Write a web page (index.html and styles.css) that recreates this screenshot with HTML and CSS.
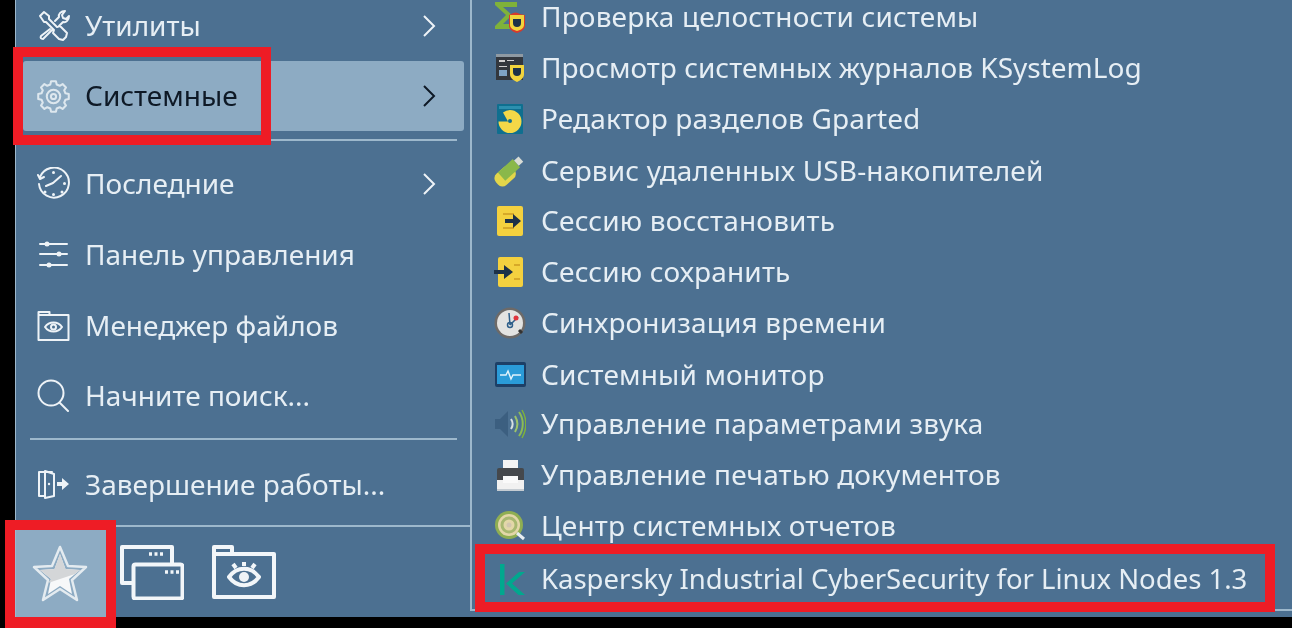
FILE: index.html
```html
<!DOCTYPE html>
<html lang="ru">
<head>
<meta charset="utf-8">
<title>Меню</title>
<link rel="stylesheet" href="styles.css">
</head>
<body>
<div class="screen">
  <div class="menu">
    <div class="left">
      <div class="cats">
        <div class="item">
          <svg class="icon" viewBox="0 0 33 33"><path d="M3 7 7 3l5 4v3l8 8 3-1 7 7-1 4-3 3-4-1-6-6 1-3-8-8H7z M18 12l4-4c-1-3 2-6 6-6l-3 4 1 3 3 1 3-3c0 4-3 7-6 6l-4 4 M13 20 4 27c-1 2 0 3 2 3l1-1 8-8"/></svg>
          <span class="label">Утилиты</span>
          <svg class="chev" viewBox="0 0 14 24"><path d="M2 2l10 10L2 22"/></svg>
        </div>
        <div class="item active">
          <svg class="icon gear" viewBox="0 0 32 32"><polygon points="13.65,1.2 18.35,1.2 19.1,4.4 22,5.6 24.8,3.9 28.1,7.2 26.4,10 27.6,12.9 30.8,13.65 30.8,18.35 27.6,19.1 26.4,22 28.1,24.8 24.8,28.1 22,26.4 19.1,27.6 18.35,30.8 13.65,30.8 12.9,27.6 10,26.4 7.2,28.1 3.9,24.8 5.6,22 4.4,19.1 1.2,18.35 1.2,13.65 4.4,12.9 5.6,10 3.9,7.2 7.2,3.9 10,5.6 12.9,4.4"/><circle cx="16" cy="16" r="6.5"/><circle cx="16" cy="16" r="2.5"/></svg>
          <span class="label">Системные</span>
          <svg class="chev" viewBox="0 0 14 24"><path d="M2 2l10 10L2 22"/></svg>
        </div>
      </div>
      <hr class="sep sep-a">
      <div class="cats">
        <div class="item">
          <svg class="icon" viewBox="0 0 33 33"><path d="M3 10A15 15 0 1 1 2 17M1 8l2 4 4-2M9 19l7-3 8-7"/><circle class="fill" cx="16.500" cy="5.500" r="1.500"/><circle class="fill" cx="27.500" cy="16.500" r="1.500"/><circle class="fill" cx="16.500" cy="27.500" r="1.500"/><circle class="fill" cx="8" cy="25" r="1.500"/><circle class="fill" cx="25" cy="25" r="1.500"/></svg>
          <span class="label">Последние</span>
          <svg class="chev" viewBox="0 0 14 24"><path d="M2 2l10 10L2 22"/></svg>
        </div>
        <div class="item">
          <svg class="icon" viewBox="0 0 33 33"><path d="M3 6h27M3 16h27M3 27h27"/><circle class="fill" cx="10" cy="6" r="2.500"/><circle class="fill" cx="22" cy="16" r="2.500"/><circle class="fill" cx="12" cy="27" r="2.500"/></svg>
          <span class="label">Панель управления</span>
        </div>
        <div class="item">
          <svg class="icon" viewBox="0 0 33 33"><path d="M1.500 31V3h11v3h19v25zM1.500 6h11"/><path d="M8 18c4-6 13-6 17 0-4 6-13 6-17 0z"/><circle cx="16.500" cy="18" r="2.500"/></svg>
          <span class="label">Менеджер файлов</span>
        </div>
        <div class="item search">
          <svg class="icon" viewBox="0 0 33 33"><circle cx="14" cy="14" r="12.500"/><path d="M23 24l8 8"/></svg>
          <span class="label">Начните поиск...</span>
        </div>
      </div>
      <hr class="sep sep-b">
      <div class="item">
        <svg class="icon" viewBox="0 0 33 33"><path d="M15 4H2v24h6M8 30V3l9 3v22l-9 2"/><path class="fill" d="M20 14h5v-4l7 6-7 6v-4h-5z"/><circle class="fill" cx="12" cy="16" r="1.200"/></svg>
        <span class="label">Завершение работы...</span>
      </div>
      <div class="bar">
        <div class="tile">
          <svg class="star" viewBox="0 0 56 58"><polygon class="star-out" points="28,2 36,21 54,22 40,35 45,55 28,44 11,55 16,35 2,22 20,21"/><polygon class="star-in" points="28,9 33.500,24 48,25 37,34 40,49 28,41 16,49 19,34 8,25 22.500,24"/><polygon class="star-top" points="28,9 33.500,24 48,25 43,29 16,38 19,34 8,25 22.500,24"/></svg>
        </div>
        <svg class="windows" viewBox="0 0 64 55"><path d="M13 38H2V2h50v18"/><rect x="13.500" y="19.500" width="49" height="34" rx="2"/><path class="dash" d="M29 9h16M45 27h16"/></svg>
        <svg class="eyefolder" viewBox="0 0 64 54"><path d="M2 52V2h18v7h42v43zM2 9h18"/><path d="M17 32c8-11 22-11 30 0-8 11-22 11-30 0z"/><circle class="fill" cx="32" cy="32" r="5"/><path d="M32 17v4M21 19l3 4M43 19l-3 4"/></svg>
      </div>
    </div>
    <div class="right">
      <div class="apps">
        <div class="app">
          <svg class="app-icon" viewBox="0 0 32 32"><path d="M23 1H1v3l11 10L1 25v3h18v-5H9l9-9-9-8h14z" fill="#7fb23a"/><path d="M17 13c3-2 6-2 9 0l5 1v11c0 3-4 6-8 7-4-1-8-4-8-7V14z" fill="#d83a2a"/><path d="M16 14h14v10c0 3-3 5-7 6-4-1-7-3-7-6z" fill="#f2d43c"/><path d="M19 18h8v4a4 4 0 0 1-8 0z" fill="#1d3148"/></svg>
          <span>Проверка целостности системы</span>
        </div>
        <div class="app log">
          <svg class="app-icon" viewBox="0 0 32 32"><rect x="2" y="2" width="27" height="26" fill="#33373d"/><rect x="2" y="2" width="27" height="3" fill="#8f9aa3"/><path d="M5 8h6v2H5zM13 8h7v1h-7zM5 14h8v1H5z" fill="#d0cfcf"/><path d="M5 18h8v6H5z" fill="#7fa4c6"/><path d="M16 13h14v9c0 4-3 6-7 8-4-2-7-4-7-8z" fill="#f2d43c"/><path d="M19 16h8v4a4 4 0 0 1-8 0z" fill="#1d3148"/></svg>
          <span>Просмотр системных журналов KSystemLog</span>
        </div>
        <div class="app">
          <svg class="app-icon" viewBox="0 0 32 32"><rect x="3" y="1" width="26" height="30" rx="1" fill="#0f6f8f"/><path d="M5 3h22v3H5z" fill="#2c8fae"/><path d="M16 7a11.500 11.500 0 1 1-11.500 11.500l9.500 0-5-9a11.500 11.500 0 0 1 7-2.500z" fill="#f4d847"/><circle cx="16" cy="18" r="2" fill="#0f6f8f"/></svg>
          <span>Редактор разделов Gparted</span>
        </div>
        <div class="app lower">
          <svg class="app-icon" viewBox="0 0 32 32"><g transform="rotate(-42 16 16)"><rect x="-2" y="9" width="22" height="15" rx="6" fill="#e3d64a"/><rect x="6" y="9" width="20" height="11" fill="#8ab84a"/><rect x="26" y="11" width="6" height="7" fill="#d9dcd6"/></g></svg>
          <span>Сервис удаленных USB-накопителей</span>
        </div>
        <div class="app higher">
          <svg class="app-icon" viewBox="0 0 32 32"><rect x="3" y="1" width="26" height="30" rx="2" fill="#f4d13f"/><path d="M9 8h11v2H9zM9 22h11v2H9z" fill="#d7a928"/><path d="M11 14h8v-5l8 7-8 7v-5h-8z" fill="#1d3148"/></svg>
          <span>Сессию восстановить</span>
        </div>
        <div class="app">
          <svg class="app-icon" viewBox="0 0 32 32"><rect x="4" y="1" width="25" height="30" rx="2" fill="#f4d13f"/><path d="M20 8h6v2h-6zM20 22h6v2h-6z" fill="#d7a928"/><path d="M0 14h10v-5l9 7-9 7v-5H0z" fill="#1d3148"/></svg>
          <span>Сессию сохранить</span>
        </div>
        <div class="app">
          <svg class="app-icon" viewBox="0 0 32 32"><circle cx="16" cy="16" r="15.500" fill="#6d6a68"/><circle cx="16" cy="16" r="13" fill="#e3e3e1"/><path d="M15 6l1 12M24 10l-8 8" stroke="#2f5f8a" stroke-width="1.500" fill="none"/><circle cx="22" cy="11" r="2.500" fill="#e0343c"/><circle cx="16" cy="18" r="2.500" fill="none" stroke="#2f5f8a" stroke-width="1.500"/><path d="M25 23l3 3" stroke="#333" stroke-width="3"/></svg>
          <span>Синхронизация времени</span>
        </div>
        <div class="app lower">
          <svg class="app-icon" viewBox="0 0 32 32"><rect x="1" y="3" width="31" height="25" rx="2" fill="#1d3f66"/><rect x="3" y="6" width="27" height="19" fill="#2a9bd8"/><path d="M6 16h6l2-4 3 8 2-4h8" stroke="#dff2fb" stroke-width="1.500" fill="none"/></svg>
          <span>Системный монитор</span>
        </div>
        <div class="app higher-2">
          <svg class="app-icon" viewBox="0 0 32 32"><path d="M1 11h5l8-8v26l-8-8H1z" fill="#3c5f80"/><path d="M17 11c2 3 2 7 0 10" stroke="#d7dfe0" stroke-width="2" fill="none"/><path d="M21 8c3 5 3 11 0 16" stroke="#9dc46a" stroke-width="2" fill="none"/><path d="M25 4c5 7 5 17 0 24" stroke="#8cbb54" stroke-width="2" fill="none"/><path d="M28 2c5 9 5 19 0 28" stroke="#7fb23a" stroke-width="1.500" fill="none"/></svg>
          <span>Управление параметрами звука</span>
        </div>
        <div class="app">
          <svg class="app-icon" viewBox="0 0 32 32"><rect x="9" y="1" width="15" height="9" fill="#f4f4f4"/><rect x="3" y="9" width="27" height="14" rx="2" fill="#45484c"/><rect x="3" y="21" width="27" height="9" fill="#f1f1f1"/><rect x="9" y="17" width="15" height="7" fill="#fafafa"/><path d="M3 30h27v2H3z" fill="#c5ccd2"/></svg>
          <span>Управление печатью документов</span>
        </div>
        <div class="app">
          <svg class="app-icon" viewBox="0 0 32 32"><circle cx="15" cy="15" r="14" fill="#8fae52"/><circle cx="15" cy="15" r="11" fill="#e3d7a8"/><circle cx="15" cy="15" r="7" fill="none" stroke="#a8b870" stroke-width="3"/><circle cx="15" cy="15" r="2.500" fill="#d3c6ae"/><path d="M23 23l7 6" stroke="#e8eef2" stroke-width="3"/></svg>
          <span>Центр системных отчетов</span>
        </div>
        <div class="app kas">
          <svg class="app-icon" viewBox="0 0 32 32"><path d="M6 0h4.500v31H6zM25 8h6L18 19.500 31 31h-6.500L12 19.500z" fill="#00a88e"/></svg>
          <span>Kaspersky Industrial CyberSecurity for Linux Nodes 1.3</span>
        </div>
      </div>
    </div>
  </div>
  <div class="mark mark-system"></div>
  <div class="mark mark-star"></div>
  <div class="mark mark-kaspersky"></div>
</div>
</body>
</html>
```
FILE: styles.css
```css
* { box-sizing: border-box; }
html, body { margin: 0; height: 100%; background: #000; overflow: hidden; }
.screen { position: relative; width: 1292px; height: 628px; filter: blur(0.45px); font-family: "Noto Sans", sans-serif; font-size: 28px; color: #e6eef4; }
.menu { display: flex; margin-left: 15px; height: 617px; background: #4c7091; border-left: 1px solid #9db8cc; overflow: hidden; }
.left { width: 454px; flex: none; display: flex; flex-direction: column; margin-top: -10px; }
.cats { display: flex; flex-direction: column; }
.item { display: flex; align-items: center; gap: 15px; height: 71px; flex: none; margin: 0 6px 0 7px; padding: 0 28px 0 14px; border-radius: 3px; }
.item .label { flex: 1; white-space: nowrap; margin-top: -2px; line-height: 34px; }
.item.active { height: 70px; background: #8dabc3; color: #0e1926; }
.item.search { height: 69px; }
.icon { width: 33px; height: 33px; flex: none; fill: none; stroke: #eef3f7; stroke-width: 2; stroke-linejoin: round; stroke-linecap: round; }
.icon .fill, .eyefolder .fill { fill: #eef3f7; stroke: none; }
.gear { stroke: #dde7ee; }
.chev { width: 14px; height: 24px; flex: none; fill: none; stroke: #eef3f7; stroke-width: 2; }
.active .chev { stroke: #0e1926; }
.sep { border: 0; height: 2px; background: #9db8cc; margin-left: 14px; margin-right: 13px; flex: none; }
.sep-a { margin-top: 8px; margin-bottom: 7px; }
.sep-b { margin-top: 8px; margin-bottom: 9px; }
.bar { display: flex; align-items: flex-start; height: 93px; flex: none; margin-top: 5px; border-top: 2px solid #9db8cc; padding-top: 3px; }
.tile { width: 91px; height: 88px; flex: none; background: #8dabc3; display: flex; align-items: center; justify-content: center; padding-right: 4px; }
.star { width: 56px; height: 58px; }
.star-out { fill: #8dabc3; stroke: #e4ebf0; stroke-width: 2.5; stroke-linejoin: round; }
.star-in { fill: #f7f8f9; }
.star-top { fill: #d4d6d8; }
.windows { width: 64px; height: 55px; flex: none; margin: 15px 0 0 13px; fill: none; stroke: #f2f6f9; stroke-width: 4; stroke-linejoin: round; }
.windows .dash { stroke-width: 3.5; stroke-dasharray: 3 2.500; }
.eyefolder { width: 64px; height: 54px; flex: none; margin: 15px 0 0 28px; fill: none; stroke: #f2f6f9; stroke-width: 4; stroke-linejoin: round; }
.right { flex: 1; height: 611px; border-left: 2px solid #9db8cc; border-bottom: 2px solid #9db8cc; overflow: hidden; }
.apps { display: flex; flex-direction: column; margin-top: -9px; }
.app { display: flex; align-items: center; gap: 15px; height: 51px; flex: none; padding-left: 22px; white-space: nowrap; letter-spacing: 0.15px; }
.app span { margin-top: -2px; line-height: 28px; }
.app.lower { margin-top: 1px; }
.app.higher { margin-top: -1px; }
.app.higher-2 { margin-top: -2px; }
.app.log { letter-spacing: 0; }
.app.kas { font-size: 27.5px; letter-spacing: 0; margin-top: 3px; }
.app-icon { width: 32px; height: 32px; flex: none; }
.mark { position: absolute; border: 10px solid #ee1c25; }
.mark-system { left: 13px; top: 47px; width: 258px; height: 98px; }
.mark-star { left: 5px; top: 520px; width: 111px; height: 108px; border-bottom-width: 11px; }
.mark-kaspersky { left: 475px; top: 544px; width: 800px; height: 68px; }
```
